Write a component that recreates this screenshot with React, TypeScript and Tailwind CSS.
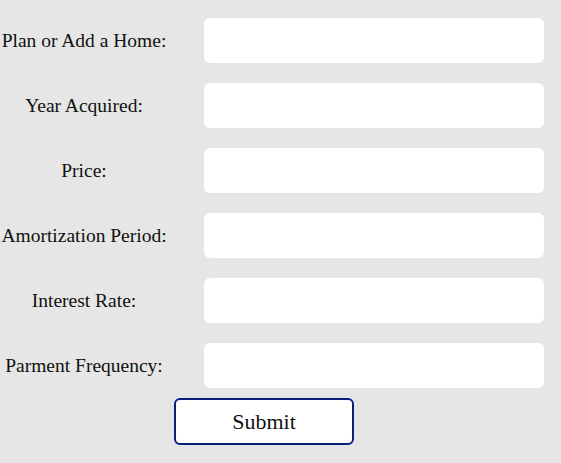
import React from "react";

const labels = [
  "Plan or Add a Home:",
  "Year Acquired:",
  "Price:",
  "Amortization Period:",
  "Interest Rate:",
  "Parment Frequency:",
];

export default function App() {
  return (
    <div
      className="w-[561px] h-[463px] bg-[#e6e6e6] text-[#111] overflow-hidden"
      style={{ fontFamily: '"Liberation Serif", "DejaVu Serif", serif' }}
    >
      <div className="flex flex-col gap-5 pt-[18px]">
        {labels.map((l) => (
          <div key={l} className="flex items-center">
            <div className="w-[168px] text-center text-[19.5px] leading-none whitespace-nowrap">{l}</div>
            <input
              type="text"
              className="ml-[36px] w-[340px] h-[45px] bg-white rounded-[6px] border-0 outline-none"
            />
          </div>
        ))}
      </div>
      <div className="pl-[174px] pt-[10px]">
        <button className="w-[180px] h-[47px] bg-white border-2 border-[#0a1f7a] rounded-[6px] text-[22px] leading-none text-[#111]">
          Submit
        </button>
      </div>
    </div>
  );
}
